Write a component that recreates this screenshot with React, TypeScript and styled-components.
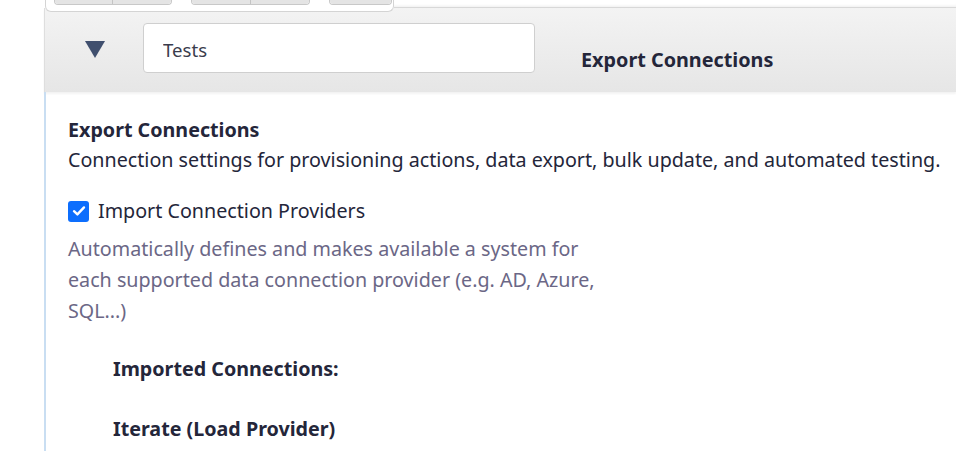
import React from 'react'
import {styled, createGlobalStyle} from 'styled-components'

const COLORS = {
  text: '#24263a',
  muted: '#6b6786',
  triangle: '#404f6e',
  border: '#d4d4d4',
  accent: '#0d6efd',
  rail: '#c9def2',
}

const GlobalStyle = createGlobalStyle`
  html, body {
    margin: 0;
    padding: 0;
    background: #ffffff;
  }
  body {
    font-family: "Noto Sans", "Open Sans", sans-serif;
    color: ${COLORS.text};
  }
`

const App: React.FC = () => {
  return (
    <>
      <GlobalStyle />
      <Page>
        <Main>
          <TopStrip>
            <Toolbar>
              <ButtonGroup>
                <ToolButton $width={57} />
                <ToolButton $width={58} />
              </ButtonGroup>
              <ButtonGroup>
                <ToolButton $width={58} />
                <ToolButton $width={58} />
              </ButtonGroup>
              <ButtonGroup>
                <ToolButton $width={61} />
              </ButtonGroup>
            </Toolbar>
            <StripFill />
          </TopStrip>
          <Header>
            <Toggle aria-label="collapse">
              <svg width="20" height="17" viewBox="0 0 20 17">
                <path d="M0 0 H20 L10 17 Z" fill={COLORS.triangle} />
              </svg>
            </Toggle>
            <NameInput defaultValue="Tests" />
            <HeaderTitle>Export Connections</HeaderTitle>
          </Header>
          <Content>
            <SectionTitle>Export Connections</SectionTitle>
            <Text>
              Connection settings for provisioning actions, data export, bulk update, and automated
              testing.
            </Text>
            <CheckRow>
              <Check>
                <svg width="14" height="12" viewBox="0 0 14 12">
                  <path
                    d="M2 6.2 L5.4 9.4 L12 2.4"
                    fill="none"
                    stroke="#fff"
                    strokeWidth="2.4"
                    strokeLinecap="round"
                    strokeLinejoin="round"
                  />
                </svg>
              </Check>
              <span>Import Connection Providers</span>
            </CheckRow>
            <Help>
              Automatically defines and makes available a system for each supported data connection
              provider (e.g. AD, Azure, SQL...)
            </Help>
            <SubTitle>Imported Connections:</SubTitle>
            <SubTitle>Iterate (Load Provider)</SubTitle>
          </Content>
        </Main>
      </Page>
    </>
  )
}

export default App

const Page = styled.div`
  display: flex;
  width: 956px;
  height: 451px;
  overflow: hidden;
  padding-left: 44px;
  box-sizing: border-box;
`

const Main = styled.div`
  flex: 1;
  display: flex;
  flex-direction: column;
`

const TopStrip = styled.div`
  display: flex;
  align-items: flex-start;
  height: 8px;
`

const Toolbar = styled.div`
  position: relative;
  z-index: 2;
  display: flex;
  gap: 19px;
  width: 349px;
  height: 12px;
  box-sizing: border-box;
  margin-left: 1px;
  padding-left: 8px;
  background: #fff;
  border: 1px solid ${COLORS.border};
  border-top: none;
  border-radius: 0 0 6px 6px;
`

const ButtonGroup = styled.div`
  display: flex;
  height: 5px;
  border-radius: 0 0 4px 4px;
  overflow: hidden;
  border: 1px solid #c8c8c8;
  border-top: none;
  margin-top: -1px;
`

const ToolButton = styled.div<{$width: number}>`
  width: ${p => p.$width}px;
  background: #e4e4e4;
  & + & {
    border-left: 1px solid #c4c4c4;
  }
`

const StripFill = styled.div`
  flex: 1;
  height: 7px;
  border-bottom: 1px solid #d8d8d8;
  box-shadow: 0 -3px 3px -2px #eee inset;
`

const Header = styled.div`
  display: flex;
  align-items: flex-start;
  height: 84px;
  box-sizing: border-box;
  padding-top: 15px;
  border-left: 1px solid #dedede;
  background: linear-gradient(#f3f3f3, #e6e6e6);
  box-shadow: 0 2px 2px rgba(0, 0, 0, 0.05);
`

const Toggle = styled.button`
  display: flex;
  align-items: center;
  justify-content: center;
  width: 98px;
  height: 52px;
  padding: 0 0 0 1px;
  border: none;
  background: transparent;
  cursor: pointer;
`

const NameInput = styled.input`
  width: 392px;
  height: 50px;
  box-sizing: border-box;
  padding: 2px 19px 0;
  border: 1px solid #cfcfcf;
  border-radius: 4px;
  background: #fff;
  font-family: "Noto Sans", sans-serif;
  font-size: 18.6px;
  color: #3a3c4c;
  outline: none;
`

const HeaderTitle = styled.div`
  margin: 24px 0 0 46px;
  font-size: 19.8px;
  font-weight: 700;
  line-height: 26px;
  color: ${COLORS.text};
`

const Content = styled.div`
  flex: 1;
  padding: 24px 0 0 22px;
  border-left: 2px solid ${COLORS.rail};
  font-size: 19.7px;
  line-height: 28px;
`

const SectionTitle = styled.div`
  font-weight: 700;
`

const Text = styled.div`
  margin-top: 2px;
  white-space: nowrap;
`

const CheckRow = styled.label`
  display: flex;
  align-items: center;
  gap: 9px;
  margin-top: 23px;
`

const Check = styled.span`
  display: flex;
  align-items: center;
  justify-content: center;
  width: 21px;
  height: 21px;
  border-radius: 3px;
  background: ${COLORS.accent};
`

const Help = styled.div`
  width: 535px;
  margin-top: 8px;
  color: ${COLORS.muted};
  line-height: 31px;
`

const SubTitle = styled.div`
  margin: 29px 0 0 45px;
  font-weight: 700;
  & + & {
    margin-top: 32px;
  }
`
